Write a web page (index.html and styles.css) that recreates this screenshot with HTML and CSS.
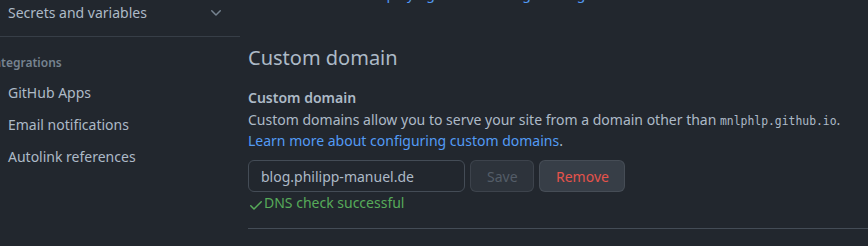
FILE: index.html
```html
<!DOCTYPE html>
<html lang="en">
<head>
<meta charset="utf-8">
<title>Pages settings</title>
<link rel="stylesheet" href="styles.css">
</head>
<body>
<div class="layout">
  <nav class="sidebar">
    <div class="nav-item nav-toggle">
      <span>Secrets and variables</span>
      <svg class="chevron" width="16" height="16" viewBox="0 0 16 16"><path d="M12.78 5.22a.749.749 0 0 1 0 1.06l-4.25 4.25a.749.749 0 0 1-1.06 0L3.220 6.28a.749.749 0 1 1 1.06-1.06L8 8.939l3.72-3.719a.749.749 0 0 1 1.06 0Z"/></svg>
    </div>
    <div class="nav-divider"></div>
    <div class="nav-heading">Integrations</div>
    <div class="nav-item">GitHub Apps</div>
    <div class="nav-item">Email notifications</div>
    <div class="nav-item">Autolink references</div>
  </nav>
  <main class="main">
    <p class="top-note"><a href="#">Learn more about deploying to GitHub Pages using custom workflows</a></p>
    <h2 class="subhead">Custom domain</h2>
    <div class="form-group">
      <div class="label">Custom domain</div>
      <p class="note">Custom domains allow you to serve your site from a domain other than <code>mnlphlp.github.io</code>. <a href="#">Learn more about configuring custom domains</a>.</p>
      <div class="controls">
        <input class="input" type="text" value="blog.philipp-manuel.de">
        <button class="btn btn-disabled" disabled>Save</button>
        <button class="btn btn-danger">Remove</button>
      </div>
      <div class="success">
        <svg class="check" width="16" height="16" viewBox="0 0 16 16"><path d="M13.78 4.22a.75.75 0 0 1 0 1.06l-7.25 7.25a.75.75 0 0 1-1.06 0L2.22 9.28a.751.751 0 0 1 .018-1.042.751.751 0 0 1 1.042-.018L6 10.94l6.72-6.72a.75.75 0 0 1 1.06 0Z"/></svg>
        <span>DNS check successful</span>
      </div>
    </div>
    <div class="section-divider"></div>
  </main>
</div>
</body>
</html>
```
FILE: styles.css
```css
html, body {
  margin: 0;
  padding: 0;
  background: #22272e;
  overflow: hidden;
}
body {
  font-family: "Noto Sans", "Liberation Sans", sans-serif;
  font-size: 14px;
  line-height: 20px;
  color: #adbac7;
  width: 868px;
  height: 246px;
}
a {
  color: #539bf5;
  text-decoration: none;
}
.layout {
  display: grid;
  grid-template-columns: 240px 628px;
}
.sidebar {
  display: flex;
  flex-direction: column;
  padding-top: 3px;
}
.nav-item {
  display: flex;
  align-items: center;
  justify-content: space-between;
  height: 32px;
  padding-left: 8px;
  padding-right: 16px;
  font-size: 14px;
  color: #adbac7;
}
.nav-toggle {
  height: 20px;
}
.chevron {
  fill: #768390;
}
.nav-divider {
  height: 1px;
  background: #373e47;
  margin-top: 13px;
  margin-bottom: 16px;
}
.nav-heading {
  font-size: 12px;
  font-weight: 600;
  line-height: 20px;
  color: #768390;
  margin-left: -11px;
  margin-bottom: 4px;
}
.main {
  padding-left: 8px;
  min-width: 0;
}
.top-note {
  margin: -16px 0 0 0;
  white-space: nowrap;
}
.subhead {
  margin: 39px 0 0 0;
  font-size: 20px;
  font-weight: 400;
  line-height: 30px;
  color: #adbac7;
}
.form-group {
  margin-top: 15px;
}
.label {
  font-weight: 600;
  color: #adbac7;
}
.note {
  margin: 2px 0 0 0;
  max-width: 610px;
}
code {
  font-family: "DejaVu Sans Mono", "Liberation Mono", monospace;
  font-size: 11.4px;
}
.controls {
  display: flex;
  gap: 5px;
  margin-top: 9px;
}
.input {
  box-sizing: border-box;
  width: 217px;
  height: 32px;
  padding: 0 12px;
  border: 1px solid #444c56;
  border-radius: 6px;
  background: #22272e;
  color: #adbac7;
  font-family: "Noto Sans", "Liberation Sans", sans-serif;
  font-size: 14px;
  outline: none;
}
.btn {
  box-sizing: border-box;
  height: 32px;
  padding: 0 16px;
  border: 1px solid rgba(205, 217, 229, 0.1);
  border-radius: 6px;
  font-family: "Noto Sans", "Liberation Sans", sans-serif;
  font-size: 14px;
  font-weight: 400;
}
.btn-disabled {
  width: 64px;
  background: #2d333b;
  color: #545d68;
}
.btn-danger {
  width: 86px;
  background: #373e47;
  color: #e5534b;
}
.success {
  display: flex;
  align-items: center;
  color: #57ab5a;
  margin-top: 1px;
}
.check {
  fill: #57ab5a;
  width: 16px;
  height: 16px;
  margin-top: 3px;
}
.section-divider {
  height: 1px;
  background: #444c56;
  margin-top: 15px;
}
```
